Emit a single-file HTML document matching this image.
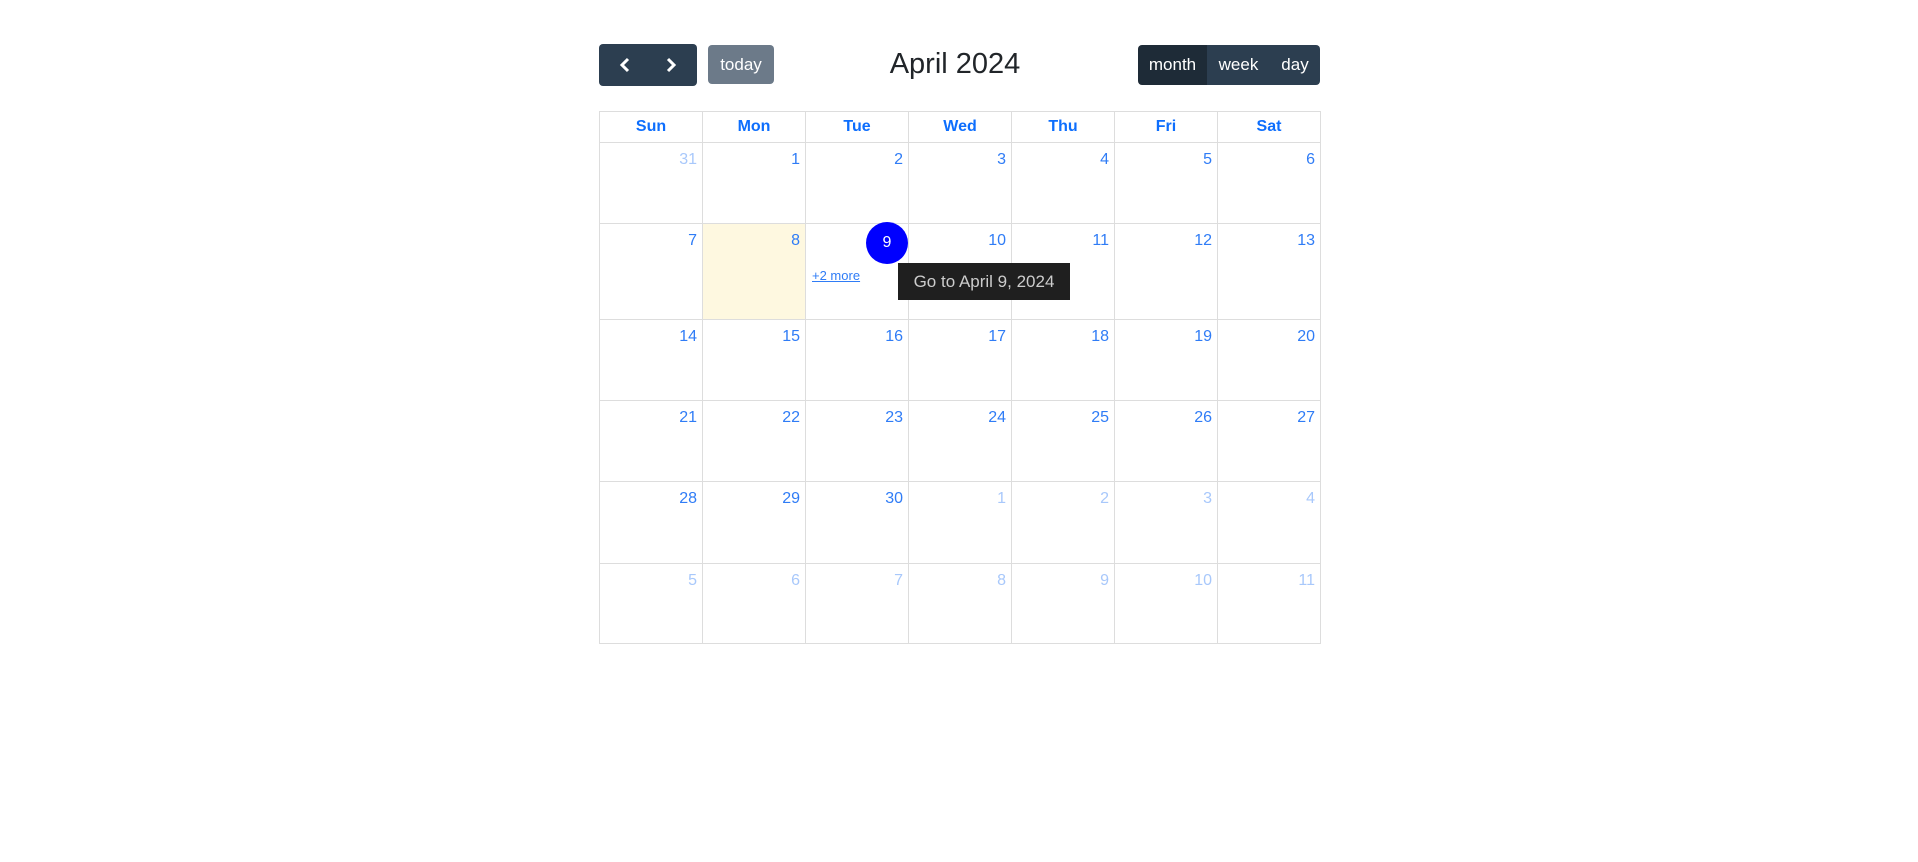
<!DOCTYPE html>
<html><head><style>
body{margin:0;background:#fff;width:1918px;height:862px;position:relative;font-family:"Liberation Sans",sans-serif;overflow:hidden}
.abs{position:absolute}
.btn{position:absolute;background:#2c3e50;color:#fff;font-size:17px;display:flex;align-items:center;justify-content:center;box-sizing:border-box}
table{position:absolute;left:599px;top:111px;width:722px;border-collapse:collapse;table-layout:fixed}
td,th{border:1px solid #ddd;padding:0}
th{height:30px;color:#0d6efd;font-size:16px;font-weight:bold}
td{vertical-align:top;text-align:right;color:#2f7cf6;font-size:16px}
td span{display:block;padding:8px 5px 0 0}
td.o{color:#a8c8fb}
</style></head><body>
<div class="btn" style="left:599px;top:44px;width:98px;height:42px;border-radius:4px">
<svg width="98" height="42"><path d="M29 15 L23 21 L29 27" stroke="#fff" stroke-width="3" fill="none"/><path d="M69 15 L75 21 L69 27" stroke="#fff" stroke-width="3" fill="none"/></svg>
</div>
<div class="btn" style="left:708px;top:45px;width:66px;height:39px;border-radius:4px;background:#6c7a89">today</div>
<div class="abs" style="left:855px;top:48px;width:200px;text-align:center;font-size:29px;color:#212529">April 2024</div>
<div class="btn" style="left:1138px;top:45px;width:69px;height:40px;border-radius:4px 0 0 4px;background:#1e2b37">month</div>
<div class="btn" style="left:1207px;top:45px;width:63px;height:40px">week</div>
<div class="btn" style="left:1270px;top:45px;width:50px;height:40px;border-radius:0 4px 4px 0">day</div>
<table>
<tr><th>Sun</th><th>Mon</th><th>Tue</th><th>Wed</th><th>Thu</th><th>Fri</th><th>Sat</th></tr>
<tr style="height:81px"><td class="o"><span>31</span></td><td><span>1</span></td><td><span>2</span></td><td><span>3</span></td><td><span>4</span></td><td><span>5</span></td><td><span>6</span></td></tr>
<tr style="height:96px"><td><span>7</span></td><td style="background:#fef8e0"><span>8</span></td><td></td><td><span>10</span></td><td><span>11</span></td><td><span>12</span></td><td><span>13</span></td></tr>
<tr style="height:81px"><td><span>14</span></td><td><span>15</span></td><td><span>16</span></td><td><span>17</span></td><td><span>18</span></td><td><span>19</span></td><td><span>20</span></td></tr>
<tr style="height:81px"><td><span>21</span></td><td><span>22</span></td><td><span>23</span></td><td><span>24</span></td><td><span>25</span></td><td><span>26</span></td><td><span>27</span></td></tr>
<tr style="height:82px"><td><span>28</span></td><td><span>29</span></td><td><span>30</span></td><td class="o"><span>1</span></td><td class="o"><span>2</span></td><td class="o"><span>3</span></td><td class="o"><span>4</span></td></tr>
<tr style="height:80px"><td class="o"><span>5</span></td><td class="o"><span>6</span></td><td class="o"><span>7</span></td><td class="o"><span>8</span></td><td class="o"><span>9</span></td><td class="o"><span>10</span></td><td class="o"><span>11</span></td></tr>
</table>
<div class="abs" style="left:866px;top:222px;width:42px;height:42px;border-radius:50%;background:#0000ff;color:#fff;font-size:16px;display:flex;align-items:center;justify-content:center">9</div>
<div class="abs" style="left:812px;top:268px;font-size:13px;color:#2f7cf6;text-decoration:underline">+2 more</div>
<div class="abs" style="left:898px;top:263px;width:172px;height:37px;background:#1f1f1f;color:#ccc;font-size:17px;display:flex;align-items:center;justify-content:center">Go to April 9, 2024</div>
</body></html>
